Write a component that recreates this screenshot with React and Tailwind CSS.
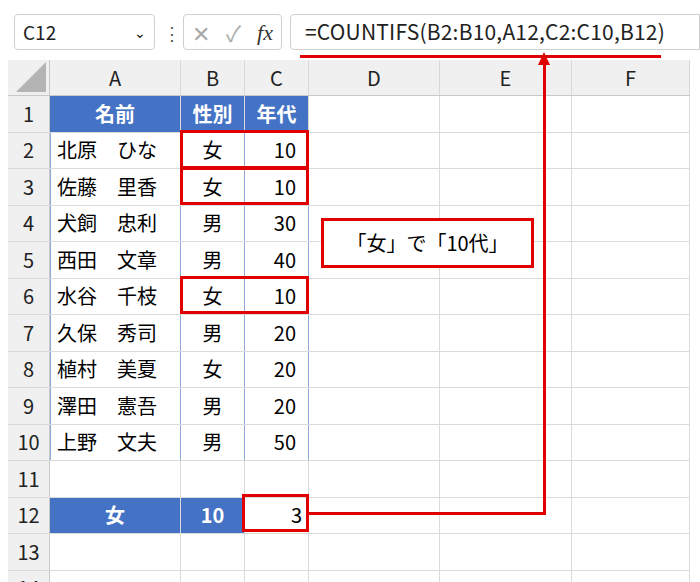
const F = { fontFamily: '"Noto Sans CJK JP","Liberation Sans",sans-serif' };
const cols = [131, 64, 64, 131, 132, 118];
const data = [
  ["北原　ひな","女","10"],["佐藤　里香","女","10"],["犬飼　忠利","男","30"],["西田　文章","男","40"],
  ["水谷　千枝","女","10"],["久保　秀司","男","20"],["植村　美夏","女","20"],["澤田　憲吾","男","20"],["上野　文夫","男","50"],
];
const RH = "h-[36.5px]";
function Row({ n, children }) {
  return (
    <div className={`flex ${RH} border-b border-[#dadada]`}>
      <div className="w-[42px] shrink-0 bg-[#f0f0f0] border-r border-[#c8c8c8] flex items-center justify-center text-[20px] text-[#222]">{n}</div>
      {children}
    </div>
  );
}
function C({ w, cls = "", children }) {
  return <div style={{ width: w }} className={`shrink-0 flex items-center border-r border-[#dadada] text-[20px] ${cls}`}>{children}</div>;
}
export default function App() {
  const red = "absolute border-[3px] border-[#e00000]";
  return (
    <div style={F} className="w-[700px] h-[582px] bg-white relative overflow-hidden">
      <div className="flex items-center h-[36px] mt-[14px] pl-[14px] gap-[8px]">
        <div className="w-[141px] h-[36px] border border-[#d0d0d0] rounded flex items-center justify-between px-2 text-[19px] text-[#222]">C12<span className="text-[14px]">⌄</span></div>
        <div className="text-[18px] text-[#555] w-[12px] text-center">⋮</div>
        <div className="w-[99px] h-[36px] border border-[#d0d0d0] rounded flex items-center justify-around text-[#aaa] text-[22px]">
          <span>✕</span><span>✓</span><span className="text-[#333] italic" style={{ fontFamily: '"Liberation Serif",serif' }}>fx</span>
        </div>
        <div className="flex-1 h-[36px] border border-[#d0d0d0] rounded-l flex items-center pl-[14px] text-[21px] text-[#222] tracking-[0.2px]">=COUNTIFS(B2:B10,A12,C2:C10,B12)</div>
      </div>
      <div className="ml-[8px] mt-[10px] w-[682px]">
        <div className="flex h-[36px] bg-[#f0f0f0] border-b border-[#c8c8c8]">
          <div className="w-[42px] shrink-0 border-r border-[#c8c8c8] relative">
            <div className="absolute right-[3px] bottom-[3px] w-0 h-0 border-l-[30px] border-l-transparent border-b-[30px] border-b-[#b4b4b4]" />
          </div>
          {["A","B","C","D","E","F"].map((l, i) => (
            <div key={l} style={{ width: cols[i] }} className="shrink-0 border-r border-[#d8d8d8] flex items-center justify-center text-[20px] text-[#222]">{l}</div>
          ))}
        </div>
        <Row n={1}>
          <C w={cols[0]} cls="bg-[#4472c4] text-white font-bold justify-center border-[#4472c4]">名前</C>
          <C w={cols[1]} cls="bg-[#4472c4] text-white font-bold justify-center border-[#4472c4]">性別</C>
          <C w={cols[2]} cls="bg-[#4472c4] text-white font-bold justify-center border-[#4472c4]">年代</C>
          <C w={cols[3]} /><C w={cols[4]} /><C w={cols[5]} />
        </Row>
        {data.map((r, i) => (
          <Row key={i} n={i + 2}>
            <C w={cols[0]} cls="pl-[6px] border-l border-l-[#8eaadb] border-r-[#8eaadb]">{r[0]}</C>
            <C w={cols[1]} cls="justify-center border-r-[#8eaadb]">{r[1]}</C>
            <C w={cols[2]} cls="justify-end pr-[12px] border-r-[#8eaadb]">{r[2]}</C>
            <C w={cols[3]} /><C w={cols[4]} /><C w={cols[5]} />
          </Row>
        ))}
        <Row n={11}>{cols.map((w, i) => <C key={i} w={w} />)}</Row>
        <Row n={12}>
          <C w={cols[0]} cls="bg-[#4472c4] text-white font-bold justify-center border-[#4472c4]">女</C>
          <C w={cols[1]} cls="bg-[#4472c4] text-white font-bold justify-center border-[#4472c4]">10</C>
          <C w={cols[2]} cls="justify-end pr-[6px]">3</C>
          <C w={cols[3]} /><C w={cols[4]} /><C w={cols[5]} />
        </Row>
        <Row n={13}>{cols.map((w, i) => <C key={i} w={w} />)}</Row>
        <Row n={14}>{cols.map((w, i) => <C key={i} w={w} />)}</Row>
      </div>
      <div className="absolute left-[300px] top-[55px] w-[361px] h-[3px] bg-[#e00000]" />
      <div className={`${red} left-[180px] top-[130px] w-[129px] h-[39px]`} />
      <div className={`${red} left-[180px] top-[167px] w-[129px] h-[38px]`} />
      <div className={`${red} left-[180px] top-[276px] w-[129px] h-[38px]`} />
      <div className={`${red} left-[242px] top-[494px] w-[67px] h-[38px]`} />
      <div className="absolute left-[309px] top-[512px] w-[237px] h-[3px] bg-[#e00000]" />
      <div className="absolute left-[543px] top-[64px] w-[3px] h-[451px] bg-[#e00000]" />
      <div className="absolute left-[538px] top-[52px] w-0 h-0 border-l-[6.5px] border-r-[6.5px] border-b-[13px] border-l-transparent border-r-transparent border-b-[#e00000]" />
      <div className={`${red} left-[321px] top-[218px] w-[213px] h-[50px] bg-white flex items-center justify-center text-[20px] text-black`}>「女」で「10代」</div>
    </div>
  );
}
